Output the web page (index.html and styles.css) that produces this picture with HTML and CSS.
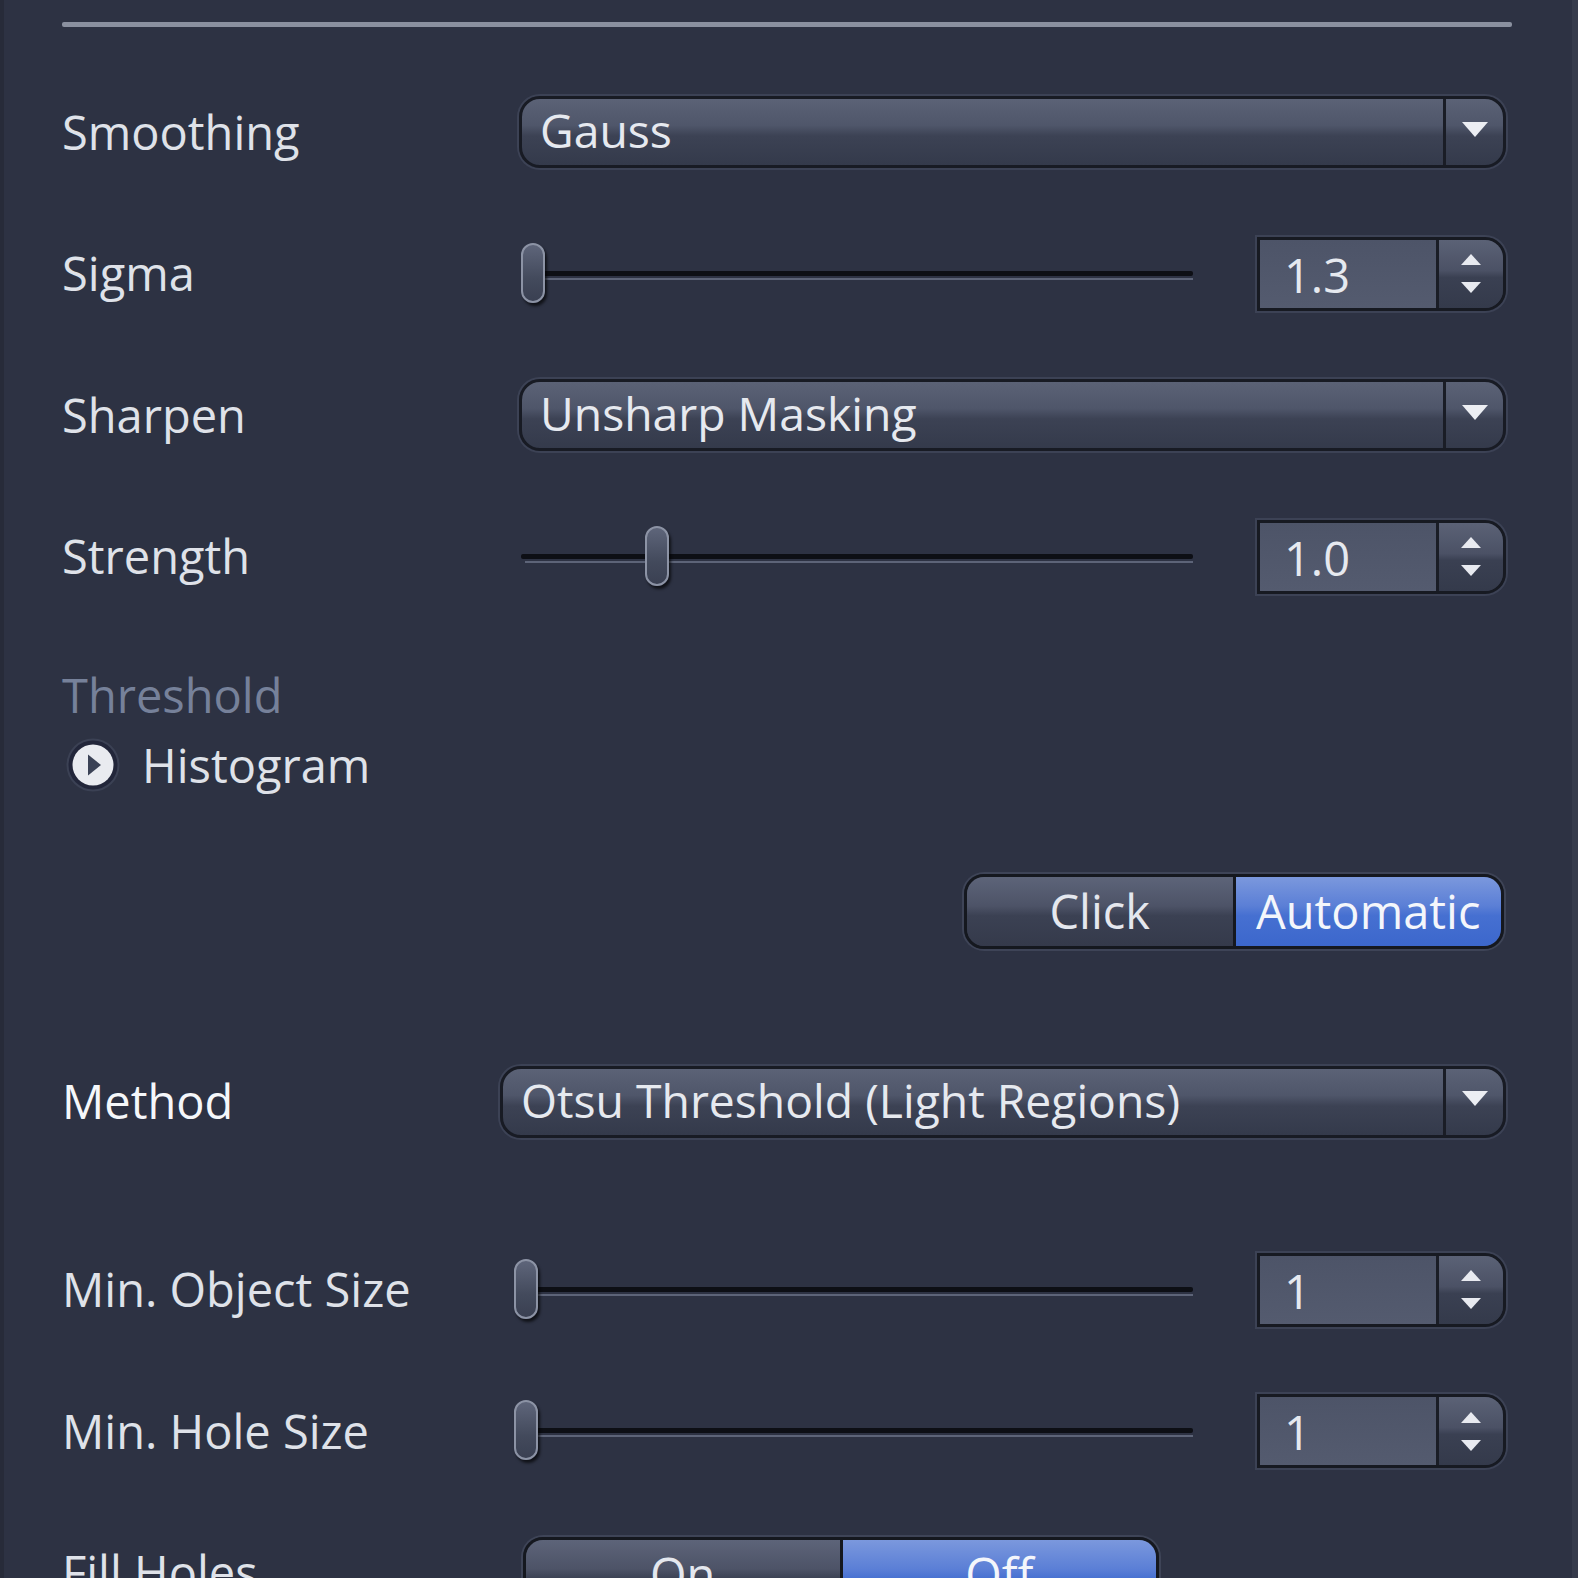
FILE: index.html
```html
<!DOCTYPE html>
<html>
<head>
<meta charset="utf-8">
<link rel="stylesheet" href="styles.css">
</head>
<body>
<div class="window">
  <div class="panel">
    <div class="rule"></div>

    <div class="row r140 first-row">
      <div class="label">Smoothing</div>
      <div class="combo"><span class="combo-text">Gauss</span><span class="combo-btn"><i class="tri-down"></i></span></div>
    </div>

    <div class="row r140">
      <div class="label">Sigma</div>
      <div class="slider"><div class="track"></div><div class="thumb" style="left:2px"></div></div>
      <div class="spin"><span class="spin-field">1.3</span><span class="spin-btns"><i class="tri-up-s"></i><i class="tri-down-s"></i></span></div>
    </div>

    <div class="row r140">
      <div class="label">Sharpen</div>
      <div class="combo"><span class="combo-text">Unsharp Masking</span><span class="combo-btn"><i class="tri-down"></i></span></div>
    </div>

    <div class="row r140">
      <div class="label">Strength</div>
      <div class="slider"><div class="track"></div><div class="thumb" style="left:126px"></div></div>
      <div class="spin"><span class="spin-field">1.0</span><span class="spin-btns"><i class="tri-up-s"></i><i class="tri-down-s"></i></span></div>
    </div>

    <div class="section-title">Threshold</div>
    <div class="expander">
      <span class="exp-icon"><svg viewBox="0 0 54 54" width="54" height="54"><circle cx="27" cy="27" r="25.5" fill="#22263a" stroke="#3b4154" stroke-width="2"/><circle cx="27" cy="27" r="20.5" fill="#e9ebf0"/><path d="M22 16.5 L35 27 L22 37.5 Z" fill="#3b4256"/></svg></span>
      <span class="exp-text">Histogram</span>
    </div>

    <div class="row seg-row">
      <div class="seg seg-mode">
        <span class="seg-item">Click</span>
        <span class="seg-item active">Automatic</span>
      </div>
    </div>

    <div class="row r140 method-row">
      <div class="label label-strong">Method</div>
      <div class="combo"><span class="combo-text">Otsu Threshold (Light Regions)</span><span class="combo-btn"><i class="tri-down"></i></span></div>
    </div>

    <div class="row r140 obj-row">
      <div class="label label-narrow">Min. Object Size</div>
      <div class="slider slider-wide"><div class="track"></div><div class="thumb" style="left:0px"></div></div>
      <div class="spin"><span class="spin-field">1</span><span class="spin-btns"><i class="tri-up-s"></i><i class="tri-down-s"></i></span></div>
    </div>

    <div class="row r140">
      <div class="label label-narrow">Min. Hole Size</div>
      <div class="slider slider-wide"><div class="track"></div><div class="thumb" style="left:0px"></div></div>
      <div class="spin"><span class="spin-field">1</span><span class="spin-btns"><i class="tri-up-s"></i><i class="tri-down-s"></i></span></div>
    </div>

    <div class="row r140 fill-row">
      <div class="label">Fill Holes</div>
      <div class="seg seg-fill">
        <span class="seg-item">On</span>
        <span class="seg-item active">Off</span>
      </div>
    </div>
  </div>
</div>
</body>
</html>
```

FILE: styles.css
```css
html, body {
  margin: 0;
  padding: 0;
  background: #2d3243;
}

body {
  font-family: "Open Sans", "Noto Sans", "DejaVu Sans", sans-serif;
  color: #dfe2e9;
  font-size: 47px;
}

.window {
  width: 1578px;
  height: 1578px;
  overflow: hidden;
  box-sizing: border-box;
  border-left: 4px solid #272b39;
  border-right: 6px solid #363b4b;
  background: #2d3243;
}

.panel {
  padding: 0 66px 0 58px;
}

.rule {
  margin-top: 22px;
  margin-right: -6px;
  height: 5px;
  background: #8a909f;
  border-radius: 2px;
}

.row {
  display: flex;
  align-items: center;
}

.r140 {
  height: 141.5px;
}

.first-row {
  margin-top: 34.5px;
}

.label {
  width: 457px;
  flex: none;
  white-space: nowrap;
  line-height: 1;
}

.label-strong {
  width: 438px;
  color: #f5f7fa;
}

.label-narrow {
  width: 452px;
}

/* combo box */
.combo {
  flex: 1;
  height: 66px;
  display: flex;
  border: 3px solid #181b24;
  border-radius: 21px;
  box-shadow: 0 0 0 2px #3c4255;
  background: linear-gradient(to bottom, #5b6276 0%, #4f566a 40%, #3c4254 56%, #343a4b 100%);
  overflow: hidden;
}

.combo-text {
  flex: 1;
  padding-left: 18px;
  line-height: 64px;
  font-size: 46.3px;
  color: #e6e9ef;
  white-space: nowrap;
}

.combo-btn {
  width: 57px;
  flex: none;
  border-left: 3px solid #1a1d26;
  display: flex;
  align-items: center;
  justify-content: center;
}

.tri-down {
  width: 0;
  height: 0;
  border-left: 13px solid transparent;
  border-right: 13px solid transparent;
  border-top: 15px solid #eceef3;
  margin-top: -6px;
}

/* slider */
.slider {
  width: 674px;
  height: 70px;
  position: relative;
  flex: none;
}

.slider-wide {
  width: 679px;
}

.track {
  position: absolute;
  left: 2px;
  right: 0;
  top: 32px;
  height: 5px;
  background: #0d0f15;
  border-radius: 2px;
}

.track::after {
  content: "";
  position: absolute;
  left: 4px;
  right: 0;
  top: 7px;
  height: 2px;
  background: #5d6478;
}

.thumb {
  position: absolute;
  top: 4px;
  width: 24px;
  height: 60px;
  box-sizing: border-box;
  border: 2px solid #8c93a5;
  border-radius: 12px;
  background: linear-gradient(to bottom, #5e657a, #434a5c 60%, #3a4052);
  box-shadow: 2px 3px 3px rgba(0, 0, 0, 0.65);
}

/* spin box */
.spin {
  margin-left: auto;
  width: 243px;
  height: 68px;
  display: flex;
  border: 3px solid #171a22;
  border-radius: 0 21px 21px 0;
  box-shadow: 0 0 0 2px #3c4255;
  overflow: hidden;
  flex: none;
}

.spin-field {
  flex: 1;
  background: linear-gradient(to bottom, #4d5468, #545b6f);
  padding-left: 24px;
  line-height: 70px;
  color: #e6e9ef;
  border-right: 3px solid #1a1d26;
}

.spin-btns {
  width: 64px;
  flex: none;
  display: flex;
  flex-direction: column;
  align-items: center;
  justify-content: center;
  gap: 17px;
  background: linear-gradient(to bottom, #5b6276 0%, #4b5165 45%, #3a4052 55%, #343a4b 100%);
}

.tri-up-s {
  width: 0;
  height: 0;
  border-left: 10px solid transparent;
  border-right: 10px solid transparent;
  border-bottom: 11px solid #e8eaf0;
}

.tri-down-s {
  width: 0;
  height: 0;
  border-left: 10px solid transparent;
  border-right: 10px solid transparent;
  border-top: 11px solid #e8eaf0;
}

/* threshold section */
.section-title {
  margin-top: 43.5px;
  height: 48px;
  line-height: 48px;
  color: #76819a;
}

.expander {
  margin-top: 16px;
  height: 60px;
  display: flex;
  align-items: center;
}

.exp-icon {
  width: 54px;
  height: 54px;
  margin-left: 4px;
  display: flex;
}

.exp-text {
  margin-left: 22px;
}

/* segmented buttons */
.seg-row {
  margin-top: 78px;
  height: 76px;
  justify-content: flex-end;
  padding-right: 2px;
}

.seg {
  display: flex;
  height: 69px;
  border: 3px solid #15181f;
  border-radius: 20px;
  box-shadow: 0 0 0 2px #3e4457;
  overflow: hidden;
  flex: none;
}

.seg-mode {
  width: 534px;
}

.seg-fill {
  width: 630px;
  margin-left: 4px;
  align-self: flex-start;
  margin-top: 35px;
}

.seg-item {
  flex: 1;
  display: flex;
  align-items: center;
  justify-content: center;
  color: #e4e7ee;
  background: linear-gradient(to bottom, #5d6479 0%, #4d5367 42%, #3b4153 56%, #353a4b 100%);
  line-height: 1;
}

.seg-item + .seg-item {
  border-left: 3px solid #15181f;
}

.seg-item.active {
  color: #f4f6fb;
  background: linear-gradient(to bottom, #7b98dd 0%, #5b7fd6 42%, #4670d1 56%, #3c67cc 100%);
}

.method-row {
  margin-top: 82px;
}

.obj-row {
  margin-top: 46.5px;
}
```
